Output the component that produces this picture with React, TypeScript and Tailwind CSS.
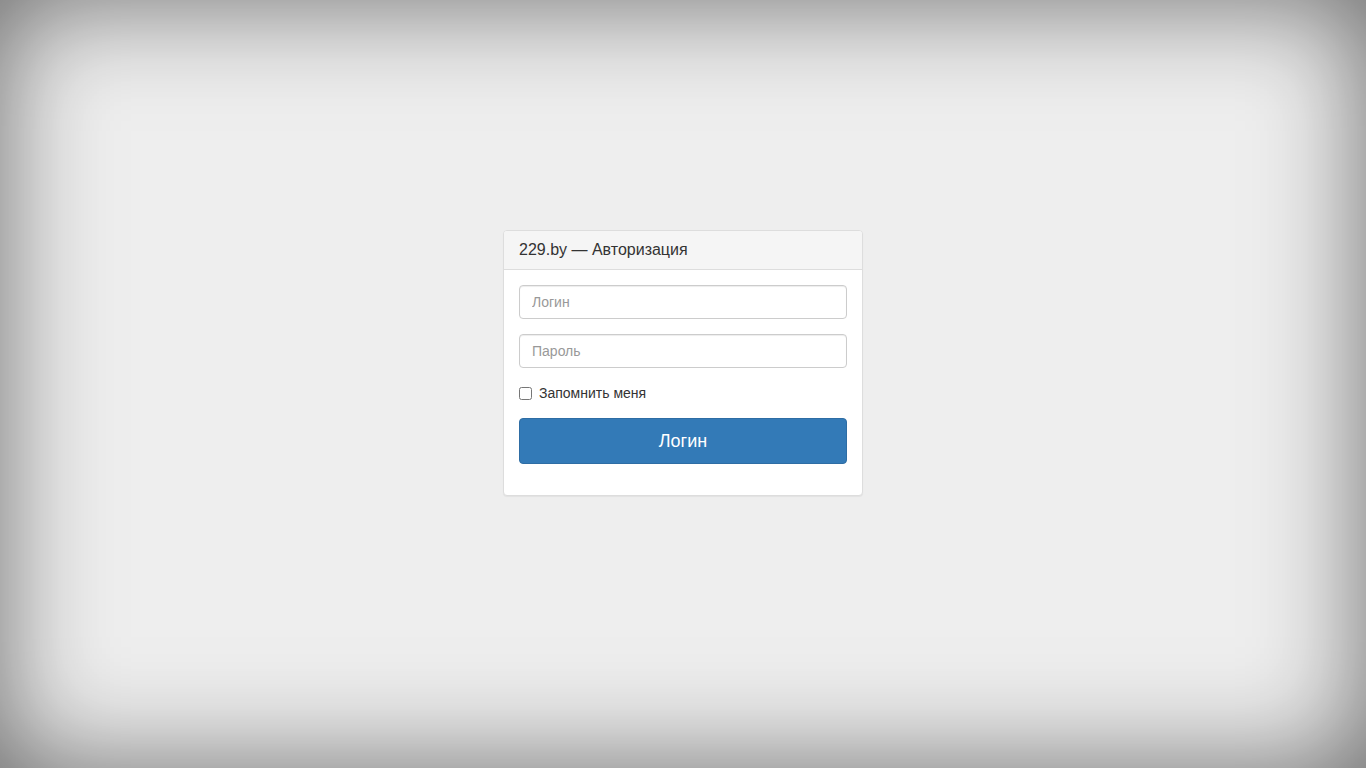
export default function App() {
  return (
    <div
      className="min-h-screen w-full bg-[#eeeeee] shadow-[inset_0_0_110px_rgba(0,0,0,0.56)] flex justify-center pt-[230px] text-[#333]"
      style={{ fontFamily: '"Liberation Sans", Arial, sans-serif' }}
    >
      <div className="w-[360px] self-start bg-white border border-[#dddddd] rounded-[4px] shadow-[0_1px_1px_rgba(0,0,0,0.05)]">
        <div className="bg-[#f5f5f5] border-b border-[#dddddd] rounded-t-[3px] px-[15px] py-[10px] text-[16px] leading-[18px]">
          229.by — Авторизация
        </div>
        <div className="p-[15px] pb-[31px]">
          <input
            type="text"
            placeholder="Логин"
            className="block w-full h-[34px] px-[12px] py-[6px] text-[14px] border border-[#cccccc] rounded-[4px] shadow-[inset_0_1px_1px_rgba(0,0,0,0.075)] placeholder:text-[#999] outline-none"
          />
          <input
            type="password"
            placeholder="Пароль"
            className="block w-full h-[34px] mt-[15px] px-[12px] py-[6px] text-[14px] border border-[#cccccc] rounded-[4px] shadow-[inset_0_1px_1px_rgba(0,0,0,0.075)] placeholder:text-[#999] outline-none"
          />
          <label className="flex items-center mt-[15px] h-[20px] text-[14px] leading-[20px]">
            <input type="checkbox" className="w-[13px] h-[13px] m-0 mr-[7px]" />
            Запомнить меня
          </label>
          <button
            type="button"
            className="block w-full h-[46px] mt-[15px] bg-[#337ab7] border border-[#2e6da4] rounded-[4px] text-white text-[18px] leading-[24px]"
          >
            Логин
          </button>
        </div>
      </div>
    </div>
  );
}
